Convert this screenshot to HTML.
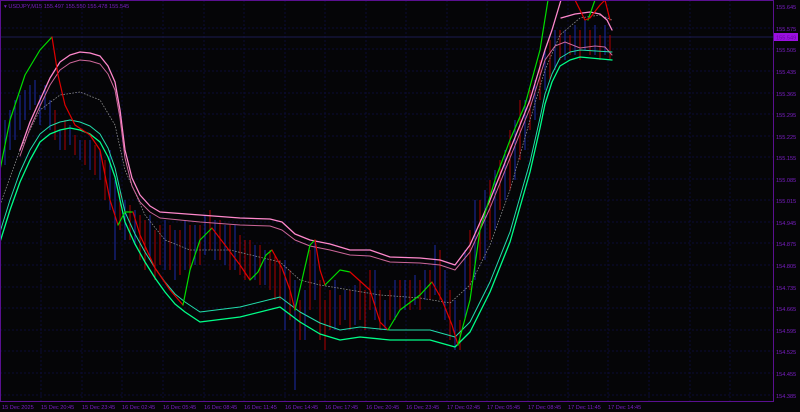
<!DOCTYPE html>
<html><head><meta charset="utf-8"><style>
html,body{margin:0;padding:0;background:#050507;}
svg{display:block}
text{font-family:"Liberation Sans",sans-serif;font-size:5.6px;fill:#7a1fc4}
</style></head><body>
<svg width="800" height="412" viewBox="0 0 800 412" xmlns="http://www.w3.org/2000/svg">
<rect width="800" height="412" fill="#050507"/>
<g stroke="#0c0c36" stroke-width="1" stroke-dasharray="2,2">
<line x1="41" y1="0" x2="41" y2="401"/><line x1="82" y1="0" x2="82" y2="401"/><line x1="122" y1="0" x2="122" y2="401"/><line x1="163" y1="0" x2="163" y2="401"/><line x1="204" y1="0" x2="204" y2="401"/><line x1="244" y1="0" x2="244" y2="401"/><line x1="285" y1="0" x2="285" y2="401"/><line x1="325" y1="0" x2="325" y2="401"/><line x1="366" y1="0" x2="366" y2="401"/><line x1="406" y1="0" x2="406" y2="401"/><line x1="447" y1="0" x2="447" y2="401"/><line x1="487" y1="0" x2="487" y2="401"/><line x1="528" y1="0" x2="528" y2="401"/><line x1="568" y1="0" x2="568" y2="401"/><line x1="608" y1="0" x2="608" y2="401"/><line x1="649" y1="0" x2="649" y2="401"/><line x1="690" y1="0" x2="690" y2="401"/><line x1="730" y1="0" x2="730" y2="401"/>
<line x1="0" y1="28" x2="773" y2="28"/><line x1="0" y1="49" x2="773" y2="49"/><line x1="0" y1="71" x2="773" y2="71"/><line x1="0" y1="93" x2="773" y2="93"/><line x1="0" y1="114" x2="773" y2="114"/><line x1="0" y1="136" x2="773" y2="136"/><line x1="0" y1="157" x2="773" y2="157"/><line x1="0" y1="179" x2="773" y2="179"/><line x1="0" y1="200" x2="773" y2="200"/><line x1="0" y1="222" x2="773" y2="222"/><line x1="0" y1="243" x2="773" y2="243"/><line x1="0" y1="265" x2="773" y2="265"/><line x1="0" y1="287" x2="773" y2="287"/><line x1="0" y1="308" x2="773" y2="308"/><line x1="0" y1="330" x2="773" y2="330"/><line x1="0" y1="351" x2="773" y2="351"/><line x1="0" y1="373" x2="773" y2="373"/><line x1="0" y1="395" x2="773" y2="395"/>
</g>
<line x1="0" y1="37" x2="773" y2="37" stroke="#1c1c50" stroke-width="1"/>
<g stroke="#1a2aa8" stroke-width="1">
<path d="M5 120V165M10 110V150M15 100V140M20 95V130M25 90V120M30 85V110M35 80V105M40 95V125M45 85V110M50 100V130M60 130V150M70 125V145M80 140V160M90 140V170M100 150V180M110 150V210M115 180V260M125 200V240M135 210V245M150 215V260M165 220V270M175 230V280M185 220V270M195 225V265M205 215V255M215 220V260M225 225V265M235 225V270M255 245V280M265 250V285M285 260V330M295 280V390M305 290V340M315 240V300M335 280V330M345 290V320M355 285V325M375 270V320M385 300V330M395 280V320M405 280V310M415 275V305M425 270V300M435 245V295M445 270V320M455 300V350M465 250V320M475 200V280M485 190V260M495 170V230M505 150V200M515 120V180M525 100V150M535 80V120M545 50V90M555 30V70M565 30V60M575 25V55M585 20V50M595 25V55M605 25V55"/>
</g>
<g stroke="#b00000" stroke-width="1">
<path d="M55 110V140M65 120V150M75 135V155M85 140V165M95 145V175M105 160V200M120 190V230M130 205V240M140 215V260M145 220V270M155 230V280M160 225V265M170 225V270M180 230V275M190 225V270M200 225V265M210 210V250M220 220V260M230 225V270M240 235V275M245 240V280M250 240V280M260 245V285M270 250V290M275 255V300M280 260V300M290 270V320M300 300V340M310 250V310M320 280V340M325 300V350M330 290V330M340 295V325M350 290V330M360 280V320M365 290V330M370 270V310M380 290V330M390 290V320M400 280V310M410 280V310M420 280V310M430 270V300M440 250V300M450 290V340M460 320V350M470 230V290M480 200V260M490 180V240M500 160V210M510 130V190M520 100V160M530 90V130M540 60V100M550 40V80M560 30V60M570 35V55M580 30V60M590 30V55M600 35V60M610 35V60"/>
</g>
<g fill="none" stroke-linejoin="round" stroke-linecap="round">
<polyline stroke="#8a8a8a" stroke-width="0.8" stroke-dasharray="1,2" points="0,205 20,150 40,110 60,95 80,92 100,100 115,125 125,170 145,215 165,240 190,250 230,250 280,262 300,280 320,285 350,290 380,295 420,298 450,303 470,285 490,245 510,190 530,120 545,70 560,35 580,18 600,15 612,20"/>
<polyline stroke="#ff88cc" stroke-width="1.3" points="20,150 30,122 40,100 50,78 60,62 70,55 80,52 90,53 100,56 108,66 115,82 120,110 125,150 132,178 140,195 150,206 160,212 200,215 240,218 270,219 282,222 295,234 310,240 330,244 350,250 370,250 390,257 420,258 440,260 455,265 470,245 490,200 510,150 530,100 545,50 552,30 558,10 561,0"/>
<polyline stroke="#cc6699" stroke-width="1" points="20,156 30,128 40,106 50,85 60,70 70,63 80,60 90,61 100,64 108,74 115,90 120,118 125,158 132,186 140,202 150,212 160,218 200,222 240,225 270,226 282,230 295,240 310,246 330,250 350,255 370,256 390,262 420,263 440,265 455,270 470,252 490,208 510,158 530,108 545,60 555,46 565,42 580,48 595,46 605,47 612,55"/>
<polyline stroke="#ff88cc" stroke-width="1.3" points="561,18 575,14 590,12 600,14 607,20 612,30"/>
<polyline stroke="#22ddaa" stroke-width="1" points="0,232 10,200 20,172 30,150 40,134 50,126 60,122 70,120 80,122 90,126 100,134 108,148 115,168 120,190 125,212 135,234 145,252 155,268 165,282 175,294 185,302 200,312 240,307 280,297 300,312 320,323 340,330 360,327 390,330 430,330 455,337 470,322 490,282 510,232 530,162 540,118 545,94 552,74 560,58 570,52 580,50 612,52"/>
<polyline stroke="#00ff88" stroke-width="1.3" points="0,242 10,210 20,182 30,160 40,142 50,134 60,130 70,128 80,130 90,134 100,142 108,157 115,177 120,200 125,222 135,244 145,262 155,278 165,292 175,304 185,312 200,322 240,317 280,307 300,322 320,334 340,340 360,337 390,340 430,340 455,347 470,332 490,292 510,242 530,172 540,128 545,104 552,82 560,66 570,60 580,57 612,60"/>
<polyline stroke="#00dd00" stroke-width="1.2" points="0,170 10,120 25,75 40,50 52,37"/>
<polyline stroke="#e00000" stroke-width="1.2" points="52,37 58,75 65,105 75,125 90,135 100,150 110,200 118,225"/>
<polyline stroke="#00dd00" stroke-width="1.2" points="118,225 125,212 133,212"/>
<polyline stroke="#e00000" stroke-width="1.2" points="133,212 140,235 155,268 170,290 183,305"/>
<polyline stroke="#00dd00" stroke-width="1.2" points="183,305 190,270 200,240 212,228"/>
<polyline stroke="#e00000" stroke-width="1.2" points="212,228 225,245 240,265 250,280"/>
<polyline stroke="#00dd00" stroke-width="1.2" points="250,280 258,272 266,255 272,250"/>
<polyline stroke="#e00000" stroke-width="1.2" points="272,250 282,268 290,290 295,310"/>
<polyline stroke="#00dd00" stroke-width="1.2" points="295,310 302,280 310,245 315,240"/>
<polyline stroke="#e00000" stroke-width="1.2" points="315,240 320,270 325,285"/>
<polyline stroke="#00dd00" stroke-width="1.2" points="325,285 340,270 350,272"/>
<polyline stroke="#e00000" stroke-width="1.2" points="350,272 370,290 380,322 388,330"/>
<polyline stroke="#00dd00" stroke-width="1.2" points="388,330 400,310 420,295 432,282"/>
<polyline stroke="#e00000" stroke-width="1.2" points="432,282 442,300 452,325 458,345"/>
<polyline stroke="#00dd00" stroke-width="1.2" points="458,345 470,300 480,230 495,180 510,140 525,105 540,50 548,0"/>
<polyline stroke="#00dd00" stroke-width="1.2" points="588,20 595,0"/>
<polyline stroke="#e00000" stroke-width="1.2" points="575,0 585,20 590,18 600,5 605,0 610,20"/>
</g>
<rect x="0.5" y="0.5" width="773" height="401" fill="none" stroke="#5a1090" stroke-width="1"/>
<text x="4" y="8">▾ USDJPY,M15  155.497 155.550 155.478 155.545</text>
<g>
<text x="776" y="9">155.645</text><text x="776" y="31">155.575</text><text x="776" y="52">155.505</text><text x="776" y="74">155.435</text><text x="776" y="96">155.365</text><text x="776" y="117">155.295</text><text x="776" y="139">155.225</text><text x="776" y="160">155.155</text><text x="776" y="182">155.085</text><text x="776" y="203">155.015</text><text x="776" y="225">154.945</text><text x="776" y="246">154.875</text><text x="776" y="268">154.805</text><text x="776" y="290">154.735</text><text x="776" y="311">154.665</text><text x="776" y="333">154.595</text><text x="776" y="354">154.525</text><text x="776" y="376">154.455</text><text x="776" y="398">154.385</text>
</g>
<rect x="774" y="33" width="24" height="8" fill="#9a10e0"/>
<text x="776" y="39.5" style="fill:#6a00a0">155.549</text>
<g>
<text x="2" y="409">15 Dec 2025</text><text x="41" y="409">15 Dec 20:45</text><text x="82" y="409">15 Dec 23:45</text><text x="122" y="409">16 Dec 02:45</text><text x="163" y="409">16 Dec 05:45</text><text x="204" y="409">16 Dec 08:45</text><text x="244" y="409">16 Dec 11:45</text><text x="285" y="409">16 Dec 14:45</text><text x="325" y="409">16 Dec 17:45</text><text x="366" y="409">16 Dec 20:45</text><text x="406" y="409">16 Dec 23:45</text><text x="447" y="409">17 Dec 02:45</text><text x="487" y="409">17 Dec 05:45</text><text x="528" y="409">17 Dec 08:45</text><text x="568" y="409">17 Dec 11:45</text><text x="608" y="409">17 Dec 14:45</text>
</g>
</svg>
</body></html>
